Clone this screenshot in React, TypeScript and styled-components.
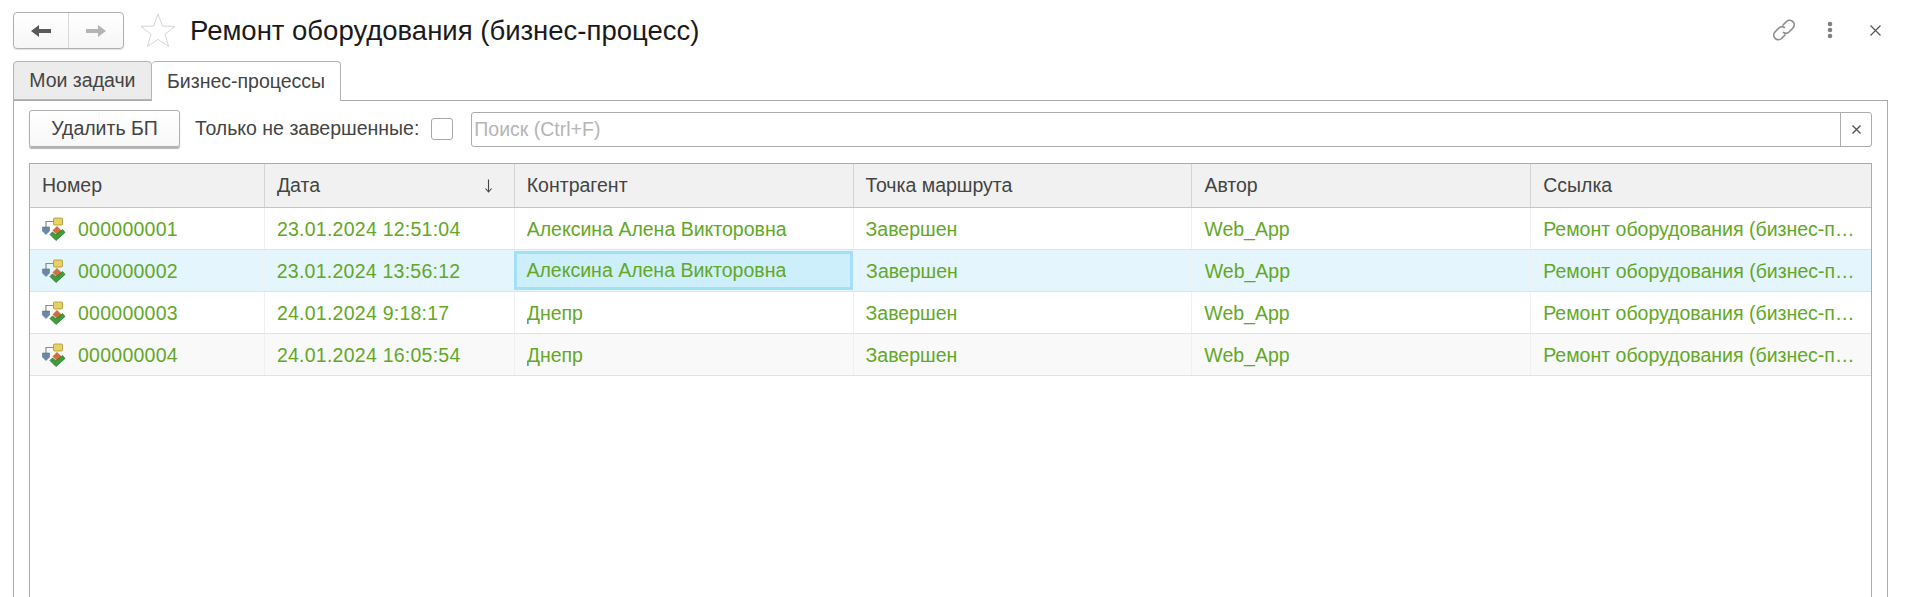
import styled, { createGlobalStyle } from 'styled-components'

const GlobalStyle = createGlobalStyle`
  html, body, #root {
    margin: 0;
    height: 100%;
    overflow: hidden;
  }
  body {
    background: #ffffff;
    font-family: 'Liberation Sans', Arial, sans-serif;
    color: #333333;
  }
  * {
    box-sizing: border-box;
  }
`

const columns = [
  { title: 'Номер', width: 235 },
  { title: 'Дата', width: 250, sorted: true },
  { title: 'Контрагент', width: 339 },
  { title: 'Точка маршрута', width: 339 },
  { title: 'Автор', width: 339 },
  { title: 'Ссылка', width: 340 },
]

const rows = [
  { number: '000000001', date: '23.01.2024 12:51:04', partner: 'Алексина Алена Викторовна' },
  { number: '000000002', date: '23.01.2024 13:56:12', partner: 'Алексина Алена Викторовна', selected: true },
  { number: '000000003', date: '24.01.2024 9:18:17', partner: 'Днепр' },
  { number: '000000004', date: '24.01.2024 16:05:54', partner: 'Днепр', shaded: true },
]

const Page = styled.div`
  height: 100vh;
  display: flex;
  flex-direction: column;
  padding: 12px 20px 0 13px;
`

const TopBar = styled.header`
  height: 49px;
  flex: none;
  display: flex;
  align-items: flex-start;
`

const NavGroup = styled.div`
  width: 111px;
  height: 37px;
  display: flex;
  align-items: center;
  border: 1px solid #b0b0b0;
  border-radius: 4px;
  box-shadow: 0 1px 1px rgba(0, 0, 0, 0.12);
  background: linear-gradient(#ffffff, #f6f6f6);
`

const NavButton = styled.div<{ $divided?: boolean }>`
  width: 55px;
  height: 100%;
  display: flex;
  align-items: center;
  justify-content: center;
  border-right: ${(props) => (props.$divided ? '1px solid #d8d8d8' : 'none')};
`

const Star = styled.svg`
  width: 38px;
  height: 38px;
  margin: 0 13px 0 15px;
  flex: none;
`

const Title = styled.h1`
  margin: 0;
  flex: 1;
  font-size: 27.5px;
  font-weight: 400;
  line-height: 37px;
  color: #1a1a1a;
`

const WindowActions = styled.div`
  display: flex;
  align-items: center;
  height: 36px;
  margin-right: 7px;
`

const ActionIcon = styled.svg<{ $gap?: number }>`
  display: block;
  margin-left: ${(props) => props.$gap ?? 0}px;
`

const Tabs = styled.div`
  flex: none;
  height: 39px;
  display: flex;
  position: relative;
  z-index: 1;
`

const Tab = styled.div<{ $active?: boolean }>`
  height: ${(props) => (props.$active ? '40px' : '39px')};
  padding: 0 15.25px;
  display: flex;
  align-items: center;
  font-size: 19.5px;
  color: #444444;
  background: ${(props) => (props.$active ? '#ffffff' : '#ececec')};
  border: 1px solid #b4b4b4;
  border-bottom: ${(props) => (props.$active ? 'none' : '1px solid #b4b4b4')};
  border-left: ${(props) => (props.$active ? 'none' : '1px solid #b4b4b4')};
  border-radius: 4px 4px 0 0;
`

const Panel = styled.section`
  flex: 1;
  min-height: 0;
  display: flex;
  flex-direction: column;
  padding: 9px 15px 0;
  border: 1px solid #ababab;
  border-bottom: none;
`

const Toolbar = styled.div`
  flex: none;
  height: 37px;
  display: flex;
  align-items: center;
  margin-bottom: 16px;
`

const Button = styled.button`
  width: 151px;
  height: 37px;
  padding: 0;
  border: 1px solid #b0b0b0;
  border-radius: 3px;
  background: linear-gradient(#ffffff, #f7f7f7);
  box-shadow: 0 2px 1px rgba(0, 0, 0, 0.3);
  font: inherit;
  font-size: 19.5px;
  color: #444444;
`

const FilterLabel = styled.label`
  margin-left: 15px;
  font-size: 19.5px;
  color: #444444;
  white-space: nowrap;
`

const Checkbox = styled.span`
  width: 22px;
  height: 22px;
  margin-left: 12px;
  flex: none;
  border: 1px solid #a8a8a8;
  border-radius: 3px;
  background: #ffffff;
`

const Search = styled.div`
  flex: 1;
  height: 35px;
  margin: 1px 0 0 18px;
  display: flex;
  border: 1px solid #ababab;
  border-radius: 3px;
`

const SearchText = styled.div`
  flex: 1;
  padding-left: 2px;
  display: flex;
  align-items: center;
  font-size: 19.5px;
  color: #b5b5b5;
`

const ClearButton = styled.div`
  width: 31px;
  display: flex;
  align-items: center;
  justify-content: center;
  border-left: 1px solid #ababab;
`

const Table = styled.div`
  flex: 1;
  min-height: 0;
  border: 1px solid #ababab;
  border-bottom: none;
`

const HeaderRow = styled.div`
  height: 44px;
  display: flex;
  background: #f1f1f1;
  border-bottom: 1px solid #c4c4c4;
`

const HeaderCell = styled.div<{ $last?: boolean }>`
  display: flex;
  align-items: center;
  justify-content: space-between;
  padding: 0 21px 0 12px;
  font-size: 19.5px;
  color: #444444;
  border-right: ${(props) => (props.$last ? 'none' : '1px solid #d4d4d4')};
`

const Row = styled.div<{ $selected?: boolean; $shaded?: boolean }>`
  height: 42px;
  display: flex;
  border-bottom: 1px solid #e2e2e2;
  background: ${(props) => (props.$selected ? '#e4f5fd' : props.$shaded ? '#f9f9f9' : '#ffffff')};
`

const Cell = styled.div<{ $focused?: boolean; $last?: boolean; $numeric?: boolean }>`
  display: flex;
  align-items: center;
  gap: 12px;
  padding: ${(props) => (props.$focused ? '0' : '1px')} 12px 0 ${(props) => (props.$focused ? '9px' : '12px')};
  font-size: 19.5px;
  letter-spacing: ${(props) => (props.$numeric ? '0.25px' : 'normal')};
  color: #62a826;
  white-space: nowrap;
  overflow: hidden;
  border-right: ${(props) => (props.$last || props.$focused ? 'none' : '1px solid #f0f0f0')};
  ${(props) =>
    props.$focused
      ? `
    background: #cdeefb;
    border: 3px solid #a5def8;
    margin: 1px 1px 0 0;
    height: 39px;
  `
      : ''}
`

const Clipped = styled.span`
  overflow: hidden;
  text-overflow: ellipsis;
`

const ArrowLeft = () => (
  <svg width='22' height='16' viewBox='0 0 22 16'>
    <path d='M1 8 L9 2 V6 H21 V10 H9 V14 Z' fill='#5a5a5a' />
  </svg>
)

const ArrowRight = () => (
  <svg width='22' height='16' viewBox='0 0 22 16'>
    <path d='M21 8 L13 2 V6 H1 V10 H13 V14 Z' fill='#b4b4b4' />
  </svg>
)

const ProcessIcon = () => (
  <svg width='24' height='24' viewBox='0 0 24 24' style={{ flex: 'none' }}>
    <path d='M4 10 V4.5 H12' fill='none' stroke='#8a8a8a' strokeWidth='1.2' />
    <rect x='11.5' y='1' width='9' height='7' rx='1' fill='#e8d063' stroke='#a89436' strokeWidth='0.8' />
    <path d='M0.5 10 H7.5 V14 L4 17.5 L0.5 14 Z' fill='#6c88a8' stroke='#566f8c' strokeWidth='0.6' />
    <path d='M15 9 L19.5 13.5 L15 18 L10.5 13.5 Z' fill='#d0703a' />
    <path d='M8 17.5 L10.5 15 L14 18 L20.5 12.5 L23 15.5 L14 23.5 Z' fill='#3f9e3a' stroke='#1f6a28' strokeWidth='0.7' />
  </svg>
)

export default function App() {
  return (
    <Page>
      <GlobalStyle />
      <TopBar>
        <NavGroup>
          <NavButton $divided>
            <ArrowLeft />
          </NavButton>
          <NavButton>
            <ArrowRight />
          </NavButton>
        </NavGroup>
        <Star viewBox='0 0 38 38'>
          <path
            d='M19 2 L23.4 14 L36 14.4 L26 22.2 L29.6 34.6 L19 27.4 L8.4 34.6 L12 22.2 L2 14.4 L14.6 14 Z'
            fill='none'
            stroke='#d6d6d6'
            strokeWidth='1'
          />
        </Star>
        <Title>Ремонт оборудования (бизнес-процесс)</Title>
        <WindowActions>
          <ActionIcon width='26' height='26' viewBox='0 0 26 26'>
            <g fill='none' stroke='#8c8c8c' strokeWidth='1.7' strokeLinecap='round'>
              <path d='M12 8 L15.5 4.5 a4.6 4.6 0 0 1 6.5 6.5 L18 15 a4.6 4.6 0 0 1 -5.5 0.6' />
              <path d='M14 18 L10.5 21.5 a4.6 4.6 0 0 1 -6.5 -6.5 L8 11 a4.6 4.6 0 0 1 5.5 -0.6' />
            </g>
          </ActionIcon>
          <ActionIcon $gap={30} width='6' height='18' viewBox='0 0 6 18'>
            <g fill='#808080'>
              <circle cx='3' cy='3' r='2.3' />
              <circle cx='3' cy='9' r='2.3' />
              <circle cx='3' cy='15' r='2.3' />
            </g>
          </ActionIcon>
          <ActionIcon $gap={37} width='11' height='11' viewBox='0 0 11 11'>
            <path d='M0.5 0.5 L10.5 10.5 M10.5 0.5 L0.5 10.5' stroke='#555555' strokeWidth='1.2' />
          </ActionIcon>
        </WindowActions>
      </TopBar>
      <Tabs>
        <Tab>Мои задачи</Tab>
        <Tab $active>Бизнес-процессы</Tab>
      </Tabs>
      <Panel>
        <Toolbar>
          <Button>Удалить БП</Button>
          <FilterLabel>Только не завершенные:</FilterLabel>
          <Checkbox />
          <Search>
            <SearchText>Поиск (Ctrl+F)</SearchText>
            <ClearButton>
              <svg width='9' height='9' viewBox='0 0 9 9'>
                <path d='M0.5 0.5 L8.5 8.5 M8.5 0.5 L0.5 8.5' stroke='#555555' strokeWidth='1.4' />
              </svg>
            </ClearButton>
          </Search>
        </Toolbar>
        <Table>
          <HeaderRow>
            {columns.map((column, index) => (
              <HeaderCell key={column.title} style={{ width: column.width }} $last={index === columns.length - 1}>
                {column.title}
                {column.sorted && (
                  <svg width='9' height='14' viewBox='0 0 9 14'>
                    <path d='M4.5 0.5 V12 M1.5 9.5 L4.5 13 L7.5 9.5' fill='none' stroke='#444444' strokeWidth='1.1' />
                  </svg>
                )}
              </HeaderCell>
            ))}
          </HeaderRow>
          {rows.map((row) => {
            const cells = [row.number, row.date, row.partner, 'Завершен', 'Web_App', 'Ремонт оборудования (бизнес-процесс) 000000001']
            return (
              <Row key={row.number} $selected={row.selected} $shaded={row.shaded}>
                {cells.map((text, index) => (
                  <Cell
                    key={index}
                    style={{ width: columns[index].width }}
                    $focused={row.selected && index === 2}
                    $last={index === cells.length - 1}
                    $numeric={index < 2}
                  >
                    {index === 0 && <ProcessIcon />}
                    <Clipped>{text}</Clipped>
                  </Cell>
                ))}
              </Row>
            )
          })}
        </Table>
      </Panel>
    </Page>
  )
}
